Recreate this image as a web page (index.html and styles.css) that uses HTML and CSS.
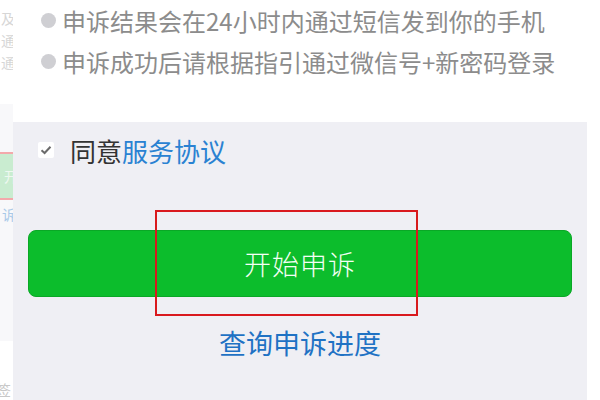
FILE: index.html
```html
<!DOCTYPE html>
<html lang="zh-CN">
<head>
    <meta charset="UTF-8">
    <title>申诉</title>
    <link rel="stylesheet" href="styles.css">
</head>
<body>
    <div class="screen">
        <!-- sliver of the previous screenshot on the left -->
        <aside class="strip">
            <div class="strip-top">
                <span>及</span>
                <span>通</span>
                <span>通</span>
            </div>
            <div class="strip-mid">
                <div class="strip-btn">开</div>
                <span class="strip-link">诉</span>
            </div>
            <div class="strip-bottom">
                <span>签</span>
            </div>
        </aside>

        <main class="panel">
            <ul class="notes">
                <li>申诉结果会在24小时内通过短信发到你的手机</li>
                <li>申诉成功后请根据指引通过微信号+新密码登录</li>
            </ul>

            <section class="form">
                <label class="agree">
                    <span class="check">
                        <svg width="12" height="10" viewBox="0 0 12 10">
                            <path d="M1.5 5.2 L4.6 8 L10.5 1.8" fill="none" stroke="#6b6b6b" stroke-width="2"/>
                        </svg>
                    </span>
                    同意<a href="#" class="terms">服务协议</a>
                </label>

                <div class="btn-wrap">
                    <button class="btn-start">开始申诉</button>
                    <div class="highlight"></div>
                </div>

                <a href="#" class="progress">查询申诉进度</a>
            </section>
        </main>

        <div class="edge"></div>
    </div>
</body>
</html>
```

FILE: styles.css
```css
body {
    margin: 0;
    font-family: "Noto Sans CJK SC", "Noto Sans", sans-serif;
    background-color: #fff;
}
.screen {
    display: grid;
    grid-template-columns: 13px 574px 13px;
    width: 600px;
    height: 400px;
    overflow: hidden;
}

/* left strip */
.strip {
    display: flex;
    flex-direction: column;
    overflow: hidden;
}
.strip-top {
    height: 95px;
    display: flex;
    flex-direction: column;
    padding-top: 10px;
    gap: 6px;
    color: #d6d6d6;
    font-size: 14px;
    line-height: 16px;
    text-indent: 1px;
}
.strip-mid {
    height: 240px;
    background-color: #f8f8fa;
    display: flex;
    flex-direction: column;
    padding-top: 48px;
    box-sizing: border-box;
}
.strip-btn {
    height: 44px;
    background-color: #c9ecd0;
    border-top: 2px solid #f3a9ab;
    border-bottom: 2px solid #f3a9ab;
    color: #eef8f0;
    font-size: 14px;
    line-height: 44px;
    text-indent: 4px;
}
.strip-link {
    color: #a9c9e8;
    font-size: 14px;
    margin-top: 4px;
    text-indent: 2px;
}
.strip-bottom {
    flex: 1;
    padding-top: 38px;
    color: #c8c8c8;
    font-size: 15px;
    text-indent: -4px;
}

/* main panel */
.panel {
    display: flex;
    flex-direction: column;
}
.notes {
    list-style: none;
    margin: 0;
    padding: 0 0 0 28px;
    height: 122px;
    box-sizing: border-box;
    background-color: #fff;
}
.notes li {
    display: flex;
    align-items: center;
    gap: 6px;
    height: 41px;
    font-size: 24px;
    color: #8c8c8c;
    white-space: nowrap;
}
.notes li::before {
    content: "";
    width: 15px;
    height: 15px;
    border-radius: 50%;
    background-color: #cfcfd3;
    flex-shrink: 0;
}

.form {
    flex: 1;
    background-color: #efeff4;
    display: flex;
    flex-direction: column;
    padding: 12px 15px 0;
}
.agree {
    display: flex;
    align-items: center;
    height: 32px;
    padding-left: 10px;
    font-size: 26px;
    color: #333;
}
.check {
    display: flex;
    align-items: center;
    justify-content: center;
    width: 16px;
    height: 16px;
    background-color: #fff;
    border-radius: 2px;
    margin-right: 16px;
}
.terms {
    color: #2a82d2;
    text-decoration: none;
}
.btn-wrap {
    position: relative;
    margin-top: 64px;
}
.btn-start {
    display: block;
    width: 100%;
    height: 67px;
    border: 1px solid #0aa826;
    border-radius: 8px;
    background-color: #0cbd2c;
    color: #f4fff4;
    font-family: inherit;
    font-size: 27px;
    font-weight: 300;
    letter-spacing: 1px;
}
.highlight {
    position: absolute;
    left: 127px;
    top: -20px;
    width: 259px;
    height: 102px;
    border: 2px solid #d9191e;
}
.progress {
    align-self: center;
    margin-top: 30px;
    line-height: 32px;
    font-size: 27px;
    color: #1f72c4;
    text-decoration: none;
}
```
